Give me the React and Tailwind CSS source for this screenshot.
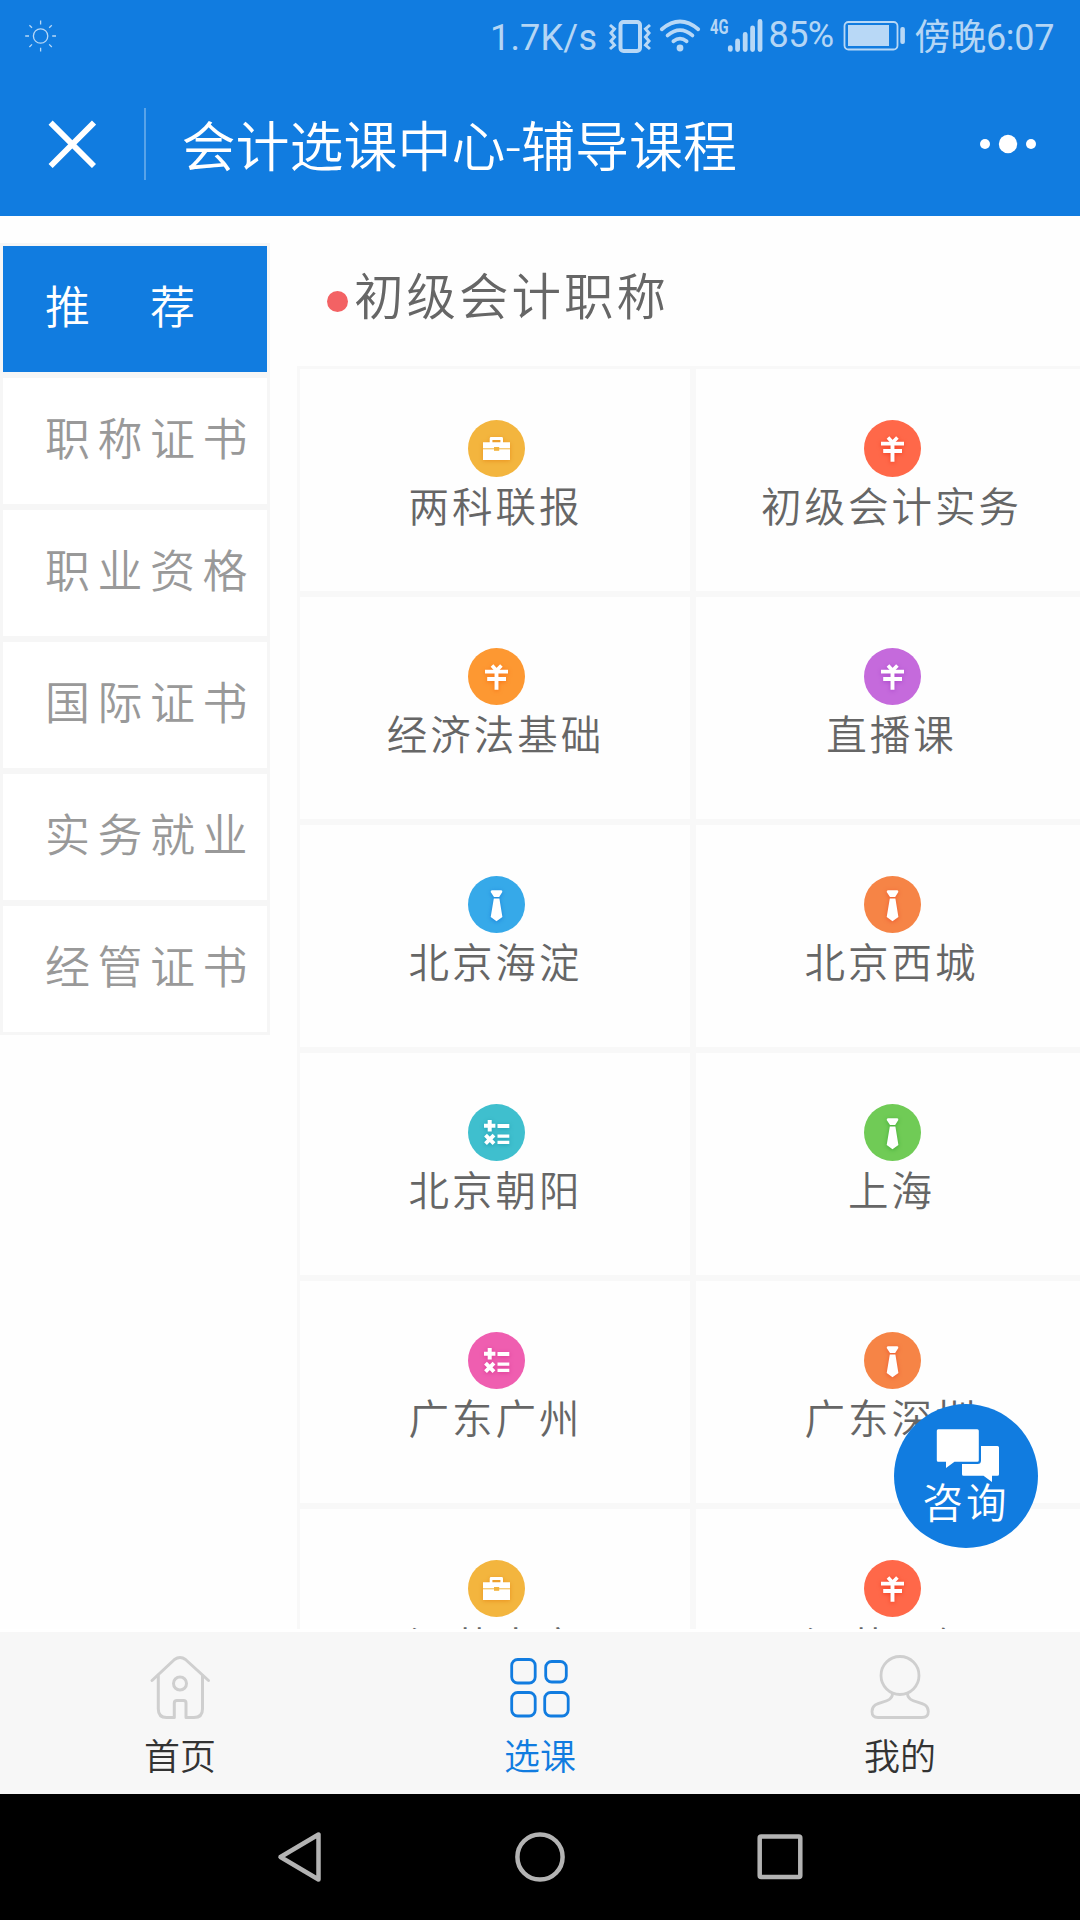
import React from "react";

const GLYPHS = {
  briefcase: (c) => (
    <>
      <path d="M21.7 22.3V18.4Q21.7 17 23.1 17H33.6Q35 17 35 18.4V22.3H42V40H15V22.3ZM24.4 22.3H32.4V20H24.4Z" fill="#fff" fillRule="evenodd" />
      <path d="M15 28.8H42" stroke={c} strokeWidth="1" />
      <rect x="26" y="27" width="5.2" height="3.8" fill={c} />
    </>
  ),
  yuan: () => (
    <g stroke="#fff" strokeWidth="3.9" fill="none">
      <path d="M17 23.6H40M19.2 31H38M28.5 23V41.7" />
      <path d="M24 17.5L28.5 22.5L33.4 17.5" strokeWidth="3.6" />
    </g>
  ),
  tie: () => (
    <path d="M24 14.3H33.2Q34.6 14.6 34.3 16L31.2 21H26L22.7 16Q22.6 14.6 24 14.3ZM25.8 22.6H31.4L34.4 41L28.5 45.3L22.7 41Z" fill="#fff" />
  ),
  calc: () => (
    <g stroke="#fff" strokeWidth="4" fill="none">
      <path d="M16 21.8H27.4M21.7 16V27.6M29.5 22H41.3" />
      <path d="M17.5 31.2L26 39.6M26 31.2L17.5 39.6" />
      <path d="M29.5 32.1H41.3M29.5 38.4H41.3" strokeWidth="3.4" />
    </g>
  ),
};

function CourseIcon({ kind, color, shade }) {
  return (
    <svg width="57" height="57" viewBox="0 0 57 57" className="block">
      <circle cx="28.5" cy="28.5" r="28.5" fill={color} />
      <g style={{ filter: `drop-shadow(0 1px 2px ${shade})` }}>{GLYPHS[kind](color)}</g>
    </svg>
  );
}

const COURSES = [
  ["两科联报", "briefcase", "#f3b53e", "#ea9420"],
  ["初级会计实务", "yuan", "#ff6849", "#f24023"],
  ["经济法基础", "yuan", "#fd9832", "#f97416"],
  ["直播课", "yuan", "#c56adc", "#ac48cc"],
  ["北京海淀", "tie", "#36a9e9", "#1c84dc"],
  ["北京西城", "tie", "#f68446", "#ef5a30"],
  ["北京朝阳", "calc", "#3fbfce", "#249fb2"],
  ["上海", "tie", "#70cb56", "#43ad38"],
  ["广东广州", "calc", "#ef5eb0", "#dc3a96"],
  ["广东深圳", "tie", "#f68446", "#ef5a30"],
  ["江苏南京", "briefcase", "#f3b53e", "#ea9420"],
  ["江苏无锡", "yuan", "#ff6849", "#f24023"],
];

const CATEGORIES = ["推\u3000荐", "职称证书", "职业资格", "国际证书", "实务就业", "经管证书"];

function StatusBar() {
  return (
    <div className="relative flex h-[72px] items-center text-[36px] leading-[72px] text-white/70">
      <svg className="ml-[24px]" width="34" height="36" viewBox="0 0 34 36" fill="none" stroke="currentColor" strokeWidth="1.3">
        <circle cx="16.6" cy="18" r="7.2" />
        <path d="M16.6 2.6V6.4M16.6 29.8V33.6M1.2 18H5M28.2 18H32M5.4 7.2L8 9.8M25.2 26.4L27.8 29M27.8 7.2L25.2 9.8M8 26.4L5.4 29" />
      </svg>
      <span className="ml-[432px] mt-[3px] w-[119px] whitespace-nowrap font-normal tracking-[0.2px]">1.7K/s</span>
      <svg width="154" height="36" viewBox="609 18 154 36" fill="none" stroke="currentColor" className="overflow-visible">
        <rect x="620.5" y="22" width="19.5" height="29" rx="3" strokeWidth="4" />
        <path d="M610 25L614.5 29L611 33L614.5 37L611 41L614.5 45L610 49M650 25L645.5 29L649 33L645.5 37L649 41L645.5 45L650 49" strokeWidth="3" />
        <path d="M661.8 29.2Q680 13.8 698.2 29.2" strokeWidth="3.8" strokeLinecap="round" />
        <path d="M667.6 35.4Q680 24.8 692.4 35.4" strokeWidth="3.8" strokeLinecap="round" />
        <path d="M673.4 41.2Q680 36 686.6 41.2" strokeWidth="3.8" strokeLinecap="round" />
        <circle cx="680" cy="48" r="3.4" fill="currentColor" stroke="none" />
        <text x="710" y="34" fontSize="19.5" fontWeight="700" textLength="18.5" lengthAdjust="spacingAndGlyphs" fill="currentColor" stroke="none">4G</text>
        <path d="M730.3 47.6V49.4M737.6 41V49.6M745.2 34.5V49.6M752.6 28V49.6M760 21.5V49.6" strokeWidth="4.8" strokeLinecap="round" />
      </svg>
      <span className="-mt-[3px] ml-[5.5px] w-[74px] whitespace-nowrap font-normal tracking-[-0.6px]">85%</span>
      <svg width="62" height="30" viewBox="843 21 62 30" fill="none" className="block">
        <rect x="844.5" y="22" width="53" height="27.5" rx="4" stroke="currentColor" strokeWidth="1.8" />
        <rect x="848" y="25" width="41" height="21" fill="currentColor" />
        <rect x="900.3" y="27" width="4.6" height="17" rx="2" fill="currentColor" />
      </svg>
      <span className="ml-[10px] mt-[3px] whitespace-nowrap font-normal tracking-[-0.3px]">傍晚6:07</span>
    </div>
  );
}

function TitleBar() {
  return (
    <div className="flex h-[144px] items-center">
      <svg className="ml-[48px]" width="48" height="48" viewBox="0 0 48 48" stroke="#fff" strokeWidth="5.8">
        <path d="M2.6 2.6L46 46M46 2.6L2.6 46" />
      </svg>
      <div className="ml-[48px] h-[72px] w-[2px] bg-white/30" />
      <h1 className="ml-[35.5px] mt-[10px] flex-1 whitespace-nowrap text-[54px] font-[350] leading-[72px] text-white">会计选课中心-辅导课程</h1>
      <svg className="mr-[43px]" width="58" height="20" viewBox="0 0 58 20" fill="#fff">
        <circle cx="6" cy="10" r="5" />
        <circle cx="29" cy="10" r="9.2" />
        <circle cx="52" cy="10" r="5" />
      </svg>
    </div>
  );
}

function Sidebar() {
  return (
    <nav className="mt-[27px] w-[270px] shrink-0">
      {CATEGORIES.map((label, i) => (
        <div
          key={label}
          className={
            "flex h-[132px] items-center whitespace-pre border-3 border-[#f6f6f6] pl-[42px] pb-px text-[45px] leading-[60px] tracking-[7.5px] " +
            (i === 0 ? "bg-[#117ce0] text-white" : "bg-white text-[#999]")
          }
        >
          {label}
        </div>
      ))}
    </nav>
  );
}

function Courses() {
  return (
    <section className="ml-[27px] w-[792px] shrink-0">
      <div className="flex h-[150px] items-center pl-[30px]">
        <span className="mt-[21px] size-[21px] rounded-full bg-[#f36264]" />
        <h2 className="ml-[6px] mt-[13px] text-[49.5px] font-[350] leading-[72px] tracking-[3px] text-[#666]">初级会计职称</h2>
      </div>
      <div className="grid grid-cols-2">
        {COURSES.map(([label, kind, color, shade]) => (
          <div key={label} className="flex h-[228px] flex-col items-center border-3 border-[#f8f8f8] pl-[3px] pt-[51px]">
            <CourseIcon kind={kind} color={color} shade={shade} />
            <span className="mr-[2px] mt-[2.5px] whitespace-nowrap text-[40.5px] leading-[57px] tracking-[3px] text-[#666]">{label}</span>
          </div>
        ))}
      </div>
    </section>
  );
}

function ConsultButton() {
  return (
    <button className="absolute left-[894px] top-[1404px] flex size-[144px] flex-col items-center rounded-full bg-[#117ce0] pt-[24px] text-white">
      <svg width="64" height="54" viewBox="0 0 64 54" fill="#fff" className="ml-[4px] block">
        <path d="M2.2 1.3H41.3Q42.8 1.3 42.8 2.8V32.2Q42.8 33.7 41.3 33.7H18.5L10 40V33.7H2.2Q.8 33.7 .8 32.2V2.8Q.8 1.3 2.2 1.3Z" />
        <path d="M45 18H61.5Q63 18 63 19.5V46.3Q63 47.8 61.5 47.8H56V54L47.5 47.8H27.5Q26 47.8 26 46.3V36H41.5Q45 36 45 32.5Z" />
      </svg>
      <span className="text-[40.5px] leading-[44px] tracking-[3px]">咨询</span>
    </button>
  );
}

function TabBar() {
  return (
    <div className="grid h-[162px] grid-cols-3 bg-[#f7f7f7] text-[36px] leading-[48px] text-[#333]">
      <div className="flex flex-col items-center pt-[21px]">
        <svg width="66" height="72" viewBox="147 1653 66 72" fill="none" stroke="#cfcfcf" strokeWidth="3" strokeLinecap="round" strokeLinejoin="round">
          <path d="M152 1680.5L174.5 1659.5Q180 1655.500 185.500 1659.5L208.500 1680.500" />
          <path d="M158.300 1675.500V1709Q158.300 1717.500 166.500 1717.500H174.300V1703Q174.300 1700.500 177 1700.500H183.500Q186 1700.500 186 1703V1717.500H194Q202.500 1717.500 202.500 1709V1675.500" />
          <circle cx="180" cy="1683.500" r="6.500" />
        </svg>
        <span className="mt-[9px]">首页</span>
      </div>
      <div className="flex flex-col items-center pt-[21px] text-[#117ce0]">
        <svg width="66" height="72" viewBox="507 1653 66 72" fill="none" stroke="currentColor" strokeWidth="2.8">
          <rect x="511.700" y="1659.500" width="23.500" height="23.500" rx="6" />
          <rect x="545.700" y="1661.500" width="20.600" height="20.500" rx="6" />
          <rect x="511.700" y="1692.500" width="23.500" height="23.500" rx="6" />
          <rect x="544.700" y="1692.500" width="23.500" height="23.500" rx="6" />
        </svg>
        <span className="mt-[9px]">选课</span>
      </div>
      <div className="flex flex-col items-center pt-[21px]">
        <svg width="66" height="72" viewBox="867 1653 66 72" fill="none" stroke="#cfcfcf" strokeWidth="2.8" strokeLinejoin="round">
          <circle cx="900" cy="1675.500" r="19" />
          <path d="M892.500 1693.500C892.500 1705 872 1699 872 1711.500Q872 1717.500 878 1717.500H922Q928.300 1717.500 928.300 1711.500C928.300 1699 907.500 1705 907.500 1693.500" />
        </svg>
        <span className="mt-[9px]">我的</span>
      </div>
    </div>
  );
}

function SystemNav() {
  return (
    <div className="flex h-[126px] items-center justify-center bg-black">
      <svg width="540" height="56" viewBox="270 1829 540 56" fill="none" stroke="#b3b3b3" strokeWidth="4.500" strokeLinejoin="round">
        <path d="M318.500 1834.500V1879.500L280.500 1857Z" />
        <circle cx="540" cy="1857" r="22.600" />
        <rect x="759.700" y="1836.500" width="40.600" height="40.600" rx="1.500" />
      </svg>
    </div>
  );
}

export default function App() {
  return (
    <div className="relative flex h-[1920px] w-[1080px] flex-col overflow-hidden bg-white font-[Roboto,'Noto_Sans_CJK_SC',sans-serif] font-[350]">
      <header className="h-[216px] shrink-0 bg-[#117ce0]">
        <StatusBar />
        <TitleBar />
      </header>
      <main className="mb-[3px] flex h-[1413px] shrink-0 overflow-hidden bg-[#fefefe]">
        <Sidebar />
        <Courses />
      </main>
      <TabBar />
      <SystemNav />
      <ConsultButton />
    </div>
  );
}
